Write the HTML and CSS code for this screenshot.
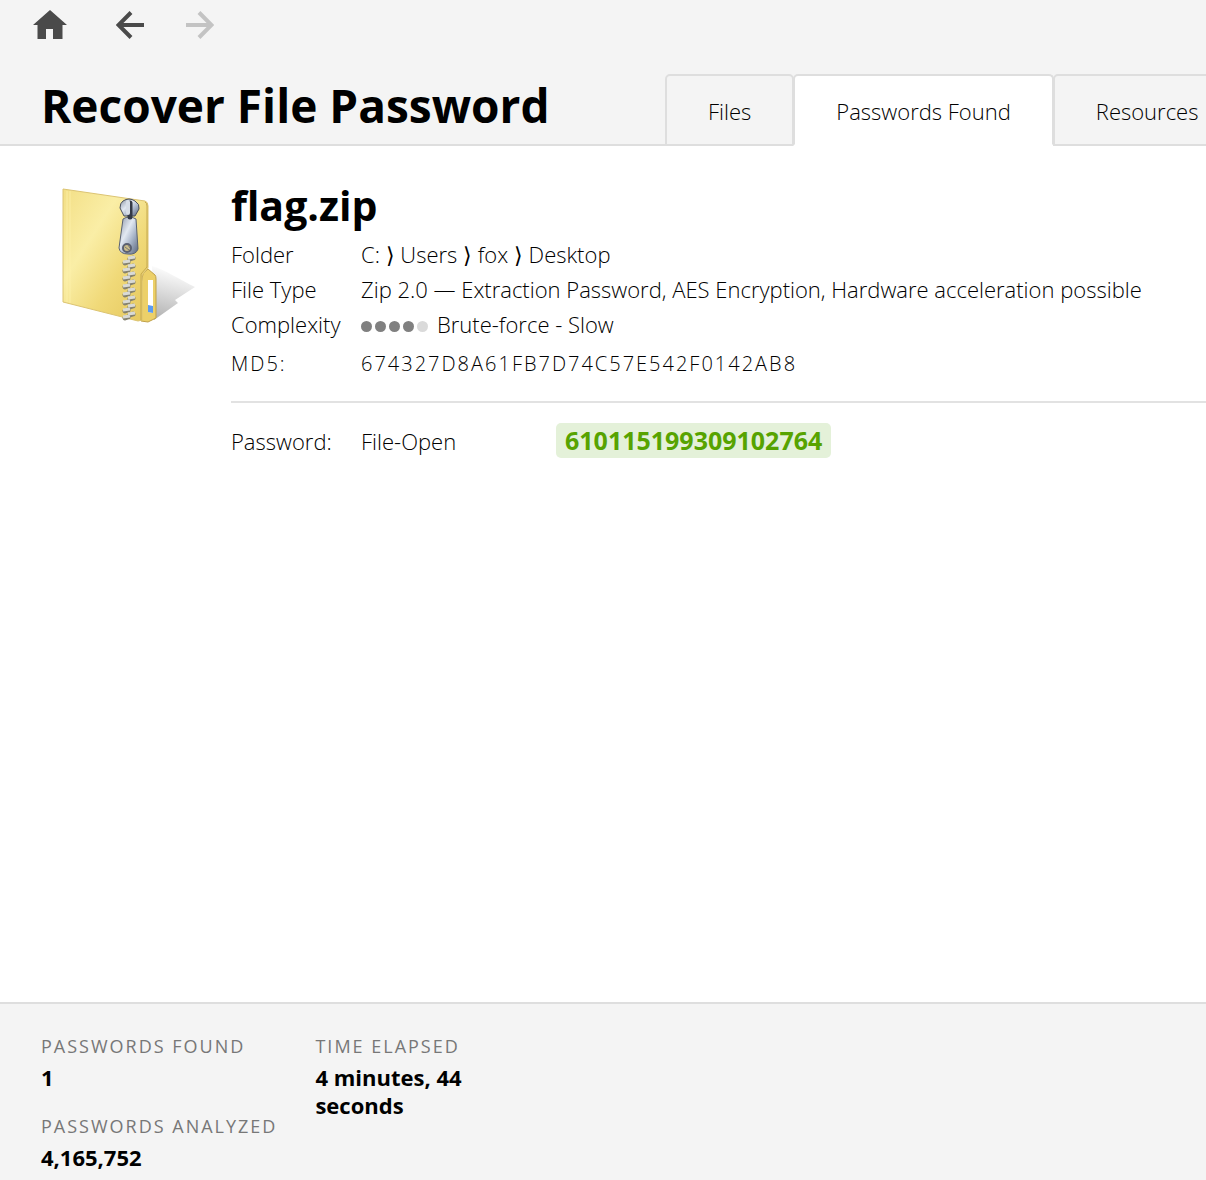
FILE: index.html
```html
<!DOCTYPE html>
<html lang="en">
<head>
    <meta charset="UTF-8">
    <meta name="viewport" content="width=device-width, initial-scale=1.0">
    <title>Recover File Password</title>
    <link rel="stylesheet" href="styles.css">
</head>
<body>
    <header>
        <div class="toolbar">
            <button type="button" class="tool-btn" aria-label="Home">
                <svg width="34" height="30" viewBox="0 0 34 30">
                    <path d="M17 0L34 15H29.500V29H20V19H13V29H4.500V15H0Z" fill="#4a4a4a"/>
                </svg>
            </button>
            <button type="button" class="tool-btn" aria-label="Back">
                <svg width="28" height="28" viewBox="0 0 28 28" fill="none" stroke="#4a4a4a" stroke-width="4">
                    <path d="M28 14H3M15 1.500L2.500 14L15 26.500"/>
                </svg>
            </button>
            <button type="button" class="tool-btn" aria-label="Forward" disabled>
                <svg width="28" height="28" viewBox="0 0 28 28" fill="none" stroke="#c3c3c3" stroke-width="4">
                    <path d="M0 14H25M13 1.500L25.500 14L13 26.500"/>
                </svg>
            </button>
        </div>
        <div class="title-bar">
            <h1>Recover File Password</h1>
            <nav class="tabs">
                <button type="button" class="tab">Files</button>
                <button type="button" class="tab active">Passwords Found</button>
                <button type="button" class="tab">Resources</button>
            </nav>
        </div>
    </header>

    <main>
        <svg class="file-icon" width="136" height="136" viewBox="0 0 136 136">
            <defs>
                <linearGradient id="folder" x1="0" y1="0" x2="1" y2="1">
                    <stop offset="0" stop-color="#f3df86"/>
                    <stop offset=".35" stop-color="#faeea6"/>
                    <stop offset=".65" stop-color="#f0d978"/>
                    <stop offset="1" stop-color="#e5c75c"/>
                </linearGradient>
                <linearGradient id="shadow" x1=".3" y1="0" x2=".1" y2="1">
                    <stop offset="0" stop-color="#fff"/>
                    <stop offset=".4" stop-color="#e0e0e0"/>
                    <stop offset="1" stop-color="#b0b0b0"/>
                </linearGradient>
                <linearGradient id="metal" x1="0" y1="0" x2="1" y2="1">
                    <stop offset="0" stop-color="#8b94a5"/>
                    <stop offset=".4" stop-color="#e2e9f2"/>
                    <stop offset=".65" stop-color="#a7b4c8"/>
                    <stop offset="1" stop-color="#59647a"/>
                </linearGradient>
            </defs>
            <path d="M90 78C104 82 118 92 133 99L113 112L116 115L92 132Z" fill="url(#shadow)"/>
            <path d="M79 96L81 86L86 81L93 87Q94 88 94 91V130L86 134L79 133Z" fill="#ecd069" stroke="#c0a149"/>
            <path d="M86 92H91V125L86 124Z" fill="#fff"/>
            <path d="M86 117L91 118V125L86 124Z" fill="#5c9bf0"/>
            <path d="M1 1L83 13Q86 14 86 18V80L80 87V132L76 133L1 114Z" fill="url(#folder)" stroke="#dcc473"/>
            <path d="M5 3V114M8 3V115" stroke="#fff3ad" stroke-width="1" opacity=".7"/>
            <path d="M83 14Q85 15 85 18V79L79 86V132" fill="none" stroke="#c5a951"/>
            <g stroke="#85826f" stroke-width="5" stroke-linecap="round">
                <path d="M68 71L71 70M63 75L66 74M68 79L71 78M63 83L66 82M68 87L71 86M63 91L66 90M68 95L71 94M63 99L66 98M68 103L71 102M63 107L66 106M68 111L71 110M63 115L66 114M68 119L71 118M63 123L66 122M68 127L71 126M63 130L66 129"/>
            </g>
            <g stroke="#d9dad5" stroke-width="3">
                <path d="M66 70L73 69M61 74L68 73M66 78L73 77M61 82L68 81M66 86L73 85M61 90L68 89M66 94L73 93M61 98L68 97M66 102L73 101M61 106L68 105M66 110L73 109M61 114L68 113M66 118L73 117M61 122L68 121M66 126L73 125M61 129L68 128"/>
            </g>
            <path d="M61 13Q67 9 73 13Q78 16 77 21L73 28H62L58 20Q58 15 61 13Z" fill="url(#metal)" stroke="#4a505c"/>
            <path d="M61 31Q67 27 74 31L76 61Q74 67 66 66Q58 66 57 60Z" fill="url(#metal)" stroke="#596273" stroke-width="1"/>
            <path d="M68 15V29" stroke="#343a46" stroke-width="5" stroke-linecap="round"/>
            <path d="M66 14V25" stroke="#d6dde7" stroke-width="4" stroke-linecap="round"/>
            <circle cx="65" cy="60" r="4" fill="#cabd8a" stroke="#5b6070" stroke-width="2"/>
            <path d="M63 59L67 62M66 57L68 60" stroke="#777" stroke-width="1"/>
        </svg>

        <div class="file-details">
            <h2>flag.zip</h2>
            <dl class="info">
                <dt>Folder</dt>
                <dd>C: ⟩ Users ⟩ fox ⟩ Desktop</dd>
                <dt>File Type</dt>
                <dd>Zip 2.0 — Extraction Password, AES Encryption, Hardware acceleration possible</dd>
                <dt>Complexity</dt>
                <dd class="complexity">
                    <span class="dots">
                        <span class="dot"></span>
                        <span class="dot"></span>
                        <span class="dot"></span>
                        <span class="dot"></span>
                        <span class="dot off"></span>
                    </span>
                    Brute-force - Slow
                </dd>
                <dt class="hash">MD5:</dt>
                <dd class="hash">674327D8A61FB7D74C57E542F0142AB8</dd>
            </dl>
            <div class="result">
                <span>Password:</span>
                <span>File-Open</span>
                <strong class="password">610115199309102764</strong>
            </div>
        </div>
    </main>

    <footer>
        <dl class="stats">
            <div class="stat">
                <dt>PASSWORDS FOUND</dt>
                <dd>1</dd>
            </div>
            <div class="stat">
                <dt>PASSWORDS ANALYZED</dt>
                <dd>4,165,752</dd>
            </div>
        </dl>
        <dl class="stats time">
            <div class="stat">
                <dt>TIME ELAPSED</dt>
                <dd>4 minutes, 44 seconds</dd>
            </div>
        </dl>
    </footer>
</body>
</html>
```
FILE: styles.css
```css
* {
    margin: 0;
    padding: 0;
    box-sizing: border-box;
}

body {
    display: flex;
    flex-direction: column;
    min-height: 100vh;
    overflow-x: hidden;
    background-color: #fff;
    color: #000;
    font-family: 'Segoe UI', 'Open Sans', 'Noto Sans', sans-serif;
    font-size: 22px;
    font-weight: 330;
    line-height: 28px;
}

button {
    border: none;
    background: none;
    color: inherit;
    font: inherit;
    cursor: pointer;
}

header {
    background-color: #f4f4f4;
    overflow: hidden;
}

.toolbar {
    display: flex;
    align-items: center;
    gap: 42px;
    height: 50px;
    padding-left: 33px;
}

.tool-btn {
    display: flex;
}

.tool-btn + .tool-btn {
    margin-left: 7px;
}

.tool-btn:disabled,
.tool-btn + .tool-btn:disabled {
    cursor: default;
    margin-left: 0;
}

.title-bar {
    display: flex;
    align-items: flex-end;
    margin-top: 24px;
    padding-left: 41px;
    box-shadow: inset 0 -2px #dedede;
}

h1 {
    flex: 0 0 624px;
    font-size: 46px;
    font-weight: 700;
    line-height: 60px;
    padding-bottom: 11px;
}

.tabs {
    display: flex;
}

.tab {
    flex-shrink: 0;
    height: 72px;
    padding: 2px 41px 0;
    border: 2px solid #dedede;
    border-radius: 5px 5px 0 0;
    white-space: nowrap;
}

.tab + .tab {
    margin-left: -1px;
}

.tab.active {
    background-color: #fff;
    border-bottom-color: #fff;
}

main {
    display: flex;
    flex: 1;
    gap: 33px;
    padding: 39px 0 40px 62px;
}

.file-icon {
    flex-shrink: 0;
    margin-top: 3px;
}

.file-details {
    flex: 1;
}

h2 {
    font-size: 41px;
    font-weight: 700;
    line-height: 40px;
    margin-bottom: 12px;
}

.info {
    display: grid;
    grid-template-columns: 130px 1fr;
    line-height: 35px;
    padding-bottom: 15px;
    border-bottom: 2px solid #e2e2e2;
}

.complexity {
    display: flex;
    align-items: center;
    gap: 9px;
}

.dots {
    display: flex;
    gap: 3px;
    padding-top: 3px;
}

.dot {
    width: 11px;
    height: 11px;
    border-radius: 50%;
    background-color: #808080;
}

.dot.off {
    background-color: #dadada;
}

.hash {
    font-size: 20px;
    letter-spacing: 2px;
    line-height: 44px;
}

.result {
    display: grid;
    grid-template-columns: 130px 195px 1fr;
    align-items: center;
    padding-top: 20px;
}

.password {
    justify-self: start;
    padding: 0 9px;
    border-radius: 5px;
    background-color: #e4f1d9;
    color: #57a300;
    font-size: 25px;
    font-weight: 700;
    line-height: 35px;
}

footer {
    display: flex;
    gap: 38px;
    padding: 28px 41px 9px;
    border-top: 2px solid #dedede;
    background-color: #f4f4f4;
}

.stat + .stat {
    margin-top: 21px;
}

.stats dt {
    margin-bottom: 3px;
    color: #777;
    font-size: 18px;
    font-weight: 400;
    letter-spacing: 2px;
}

.stats dd {
    font-weight: 700;
}

.time {
    width: 160px;
}
```
